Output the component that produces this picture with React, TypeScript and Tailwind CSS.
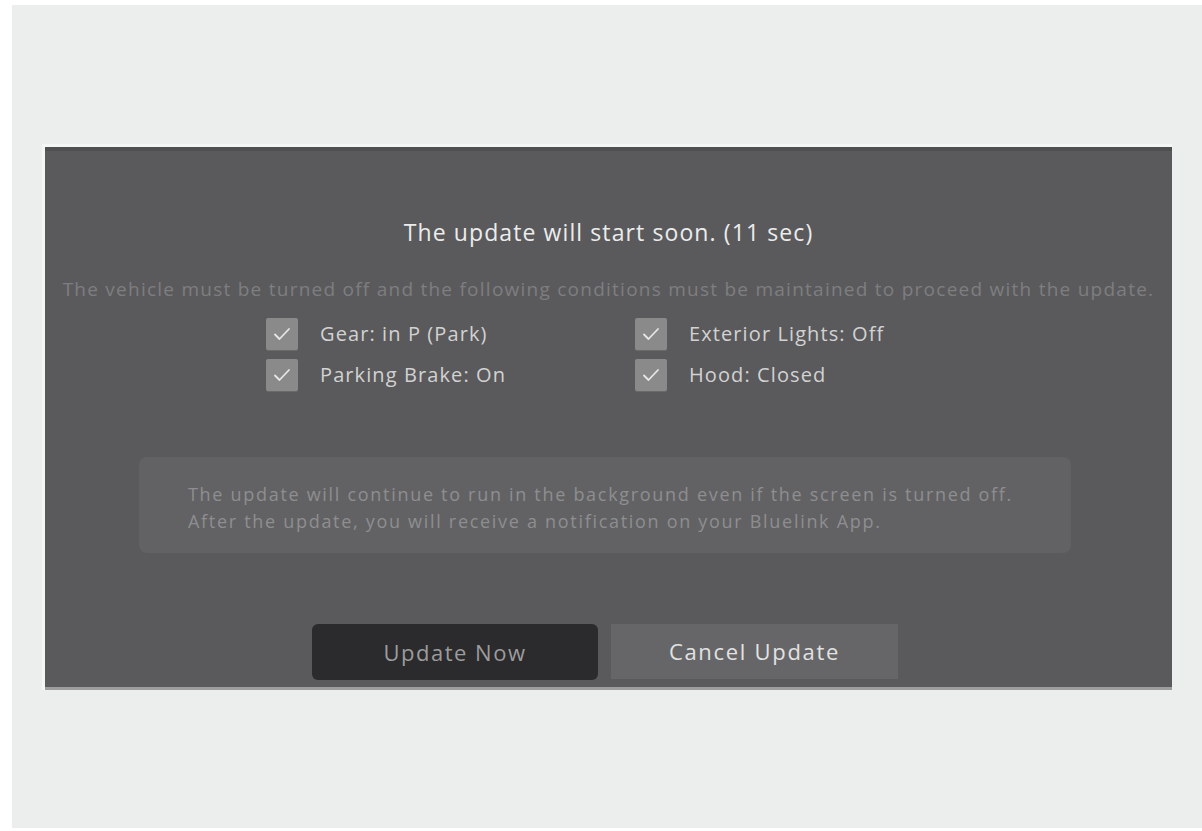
const conditions = [
  ['Gear: in P (Park)', 'Exterior Lights: Off'],
  ['Parking Brake: On', 'Hood: Closed'],
]

function CheckBox() {
  return (
    <div className="flex h-8 w-8 shrink-0 items-center justify-center rounded-[2px] bg-[#8a8a8b] shadow-[0_1px_0_#6a6a6a]">
      <svg width="18" height="14" viewBox="0 0 18 14" fill="none">
        <path d="M2 7.5 L6.5 12 L16 2" stroke="#e6e6e6" strokeWidth="1.8" strokeLinecap="round" strokeLinejoin="round" />
      </svg>
    </div>
  )
}

function Condition({ label }: { label: string }) {
  return (
    <div className="flex items-center gap-[22px]">
      <CheckBox />
      <span className="text-[20px] leading-[28px] tracking-[1.1px] text-[#d2d2d2]">{label}</span>
    </div>
  )
}

export default function App() {
  return (
    <div className="min-h-[831px] w-[1202px] bg-white pl-3 pt-[5px] font-['Open_Sans',sans-serif]">
      <div className="h-[823px] bg-[#eceeed] pt-[139px]">
        <div className="ml-[30px] mr-[30px] border-l-[3px] border-t-[3px] border-[#f4f5f5]">
          <div className="flex h-[543px] flex-col items-center border-b-[3px] border-t-4 border-b-[#9d9d9d] border-t-[#4f4f51] bg-[#5a5a5c]">
            <h1 className="mt-[65px] text-[23px] leading-[32px] tracking-[1.1px] text-[#ececec]">
              The update will start soon. (11 sec)
            </h1>
            <p className="mt-[28px] text-[19px] leading-[27px] tracking-[1.25px] text-[#7e7e80]">
              The vehicle must be turned off and the following conditions must be maintained to proceed with the update.
            </p>
            <div className="mt-[15px] grid grid-cols-[369px_316px] gap-y-[9px]">
              {conditions.map(([a, b]) => (
                <>
                  <Condition key={a} label={a} />
                  <Condition key={b} label={b} />
                </>
              ))}
            </div>
            <div className="mt-[66px] ml-[94px] h-[96px] w-[932px] self-start rounded-[8px] bg-[#626264] pl-[49px] pt-[24px] text-[18px] leading-[27px] tracking-[1.7px] text-[#8e8e90]">
              <p>The update will continue to run in the background even if the screen is turned off.</p>
              <p>After the update, you will receive a notification on your Bluelink App.</p>
            </div>
            <div className="mt-[71px] ml-[267px] flex gap-[13px] self-start">
              <button className="h-[56px] w-[286px] rounded-[6px] bg-[#2b2a2c] text-[22px] tracking-[1.5px] text-[#9c9c9c]">
                Update Now
              </button>
              <button className="h-[55px] w-[287px] bg-[#666668] text-[22px] tracking-[1.7px] text-[#e2e2e2]">
                Cancel Update
              </button>
            </div>
          </div>
        </div>
      </div>
    </div>
  )
}
